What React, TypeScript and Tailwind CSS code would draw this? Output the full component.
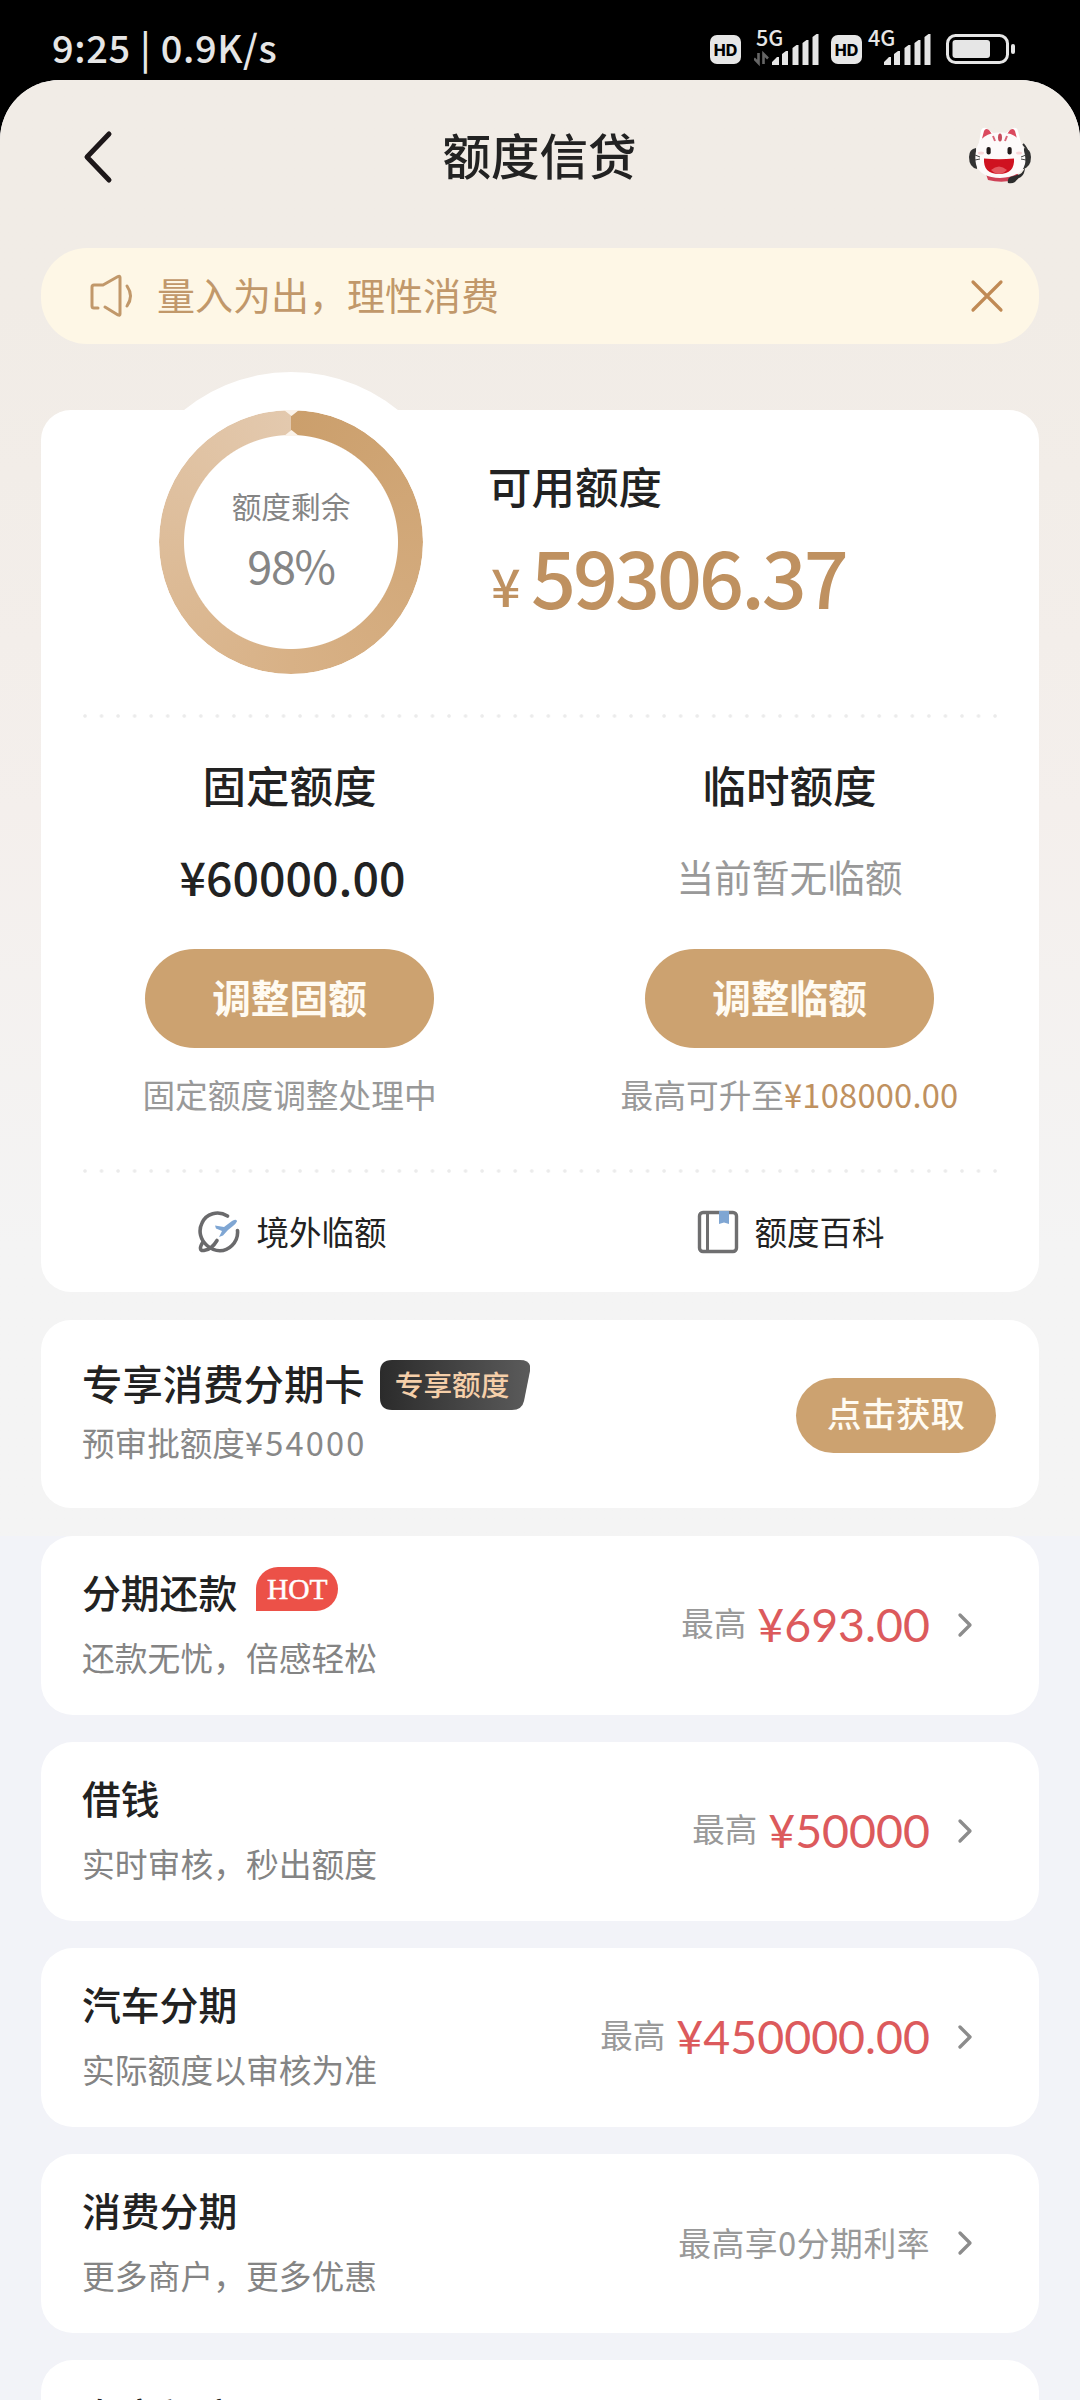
import { FiChevronRight } from "react-icons/fi";

const products = [
  { title: "分期还款", desc: "还款无忧，倍感轻松", amount: "¥693.00", hot: true },
  { title: "借钱", desc: "实时审核，秒出额度", amount: "¥50000" },
  { title: "汽车分期", desc: "实际额度以审核为准", amount: "¥450000.00" },
  { title: "消费分期", desc: "更多商户，更多优惠", note: "最高享0分期利率" },
];

function HdBadge() {
  return (
    <div className="mt-[35px] flex h-[29px] w-[31px] items-center justify-center rounded-[7px] bg-[#e6e6e6] font-['Inter'] text-[16px] font-extrabold leading-none text-black">
      HD
    </div>
  );
}

function Signal({ label, arrows }: { label: string; arrows?: boolean }) {
  return (
    <svg className="block h-20 w-[66px]" viewBox="0 0 66 80" fill="#e6e6e6">
      <text x="2" y="45.5" fontSize="21.5" fontWeight="500" fontFamily="Noto Sans CJK SC, sans-serif">
        {label}
      </text>
      {arrows && (
        <path d="M4.5 53v10L0 58.500M9.500 64V54l4.500 4.500" stroke="#666" strokeWidth="2.600" fill="none" />
      )}
      <path d="M18 65v-3l5-5h2v8zM28 65V54l4-3h2v14zM38.500 65V48l4-3h2v20zM48.500 65V43l4-3h2v25zM58.500 65V37l4-3h2v31z" />
    </svg>
  );
}

function StatusBar() {
  return (
    <div className="flex h-20 justify-between bg-black pl-[52px] pr-[64px]">
      <span className="pt-[11px] text-[38px] font-medium leading-[72px] tracking-[0.65px] text-[#e6e6e6]">
        9:25 | 0.9K/s
      </span>
      <div className="flex">
        <HdBadge />
        <div className="ml-[13px]">
          <Signal label="5G" arrows />
        </div>
        <div className="ml-[11px]">
          <HdBadge />
        </div>
        <div className="ml-[4px]">
          <Signal label="4G" />
        </div>
        <svg className="ml-[14px] block h-20 w-[70px]" viewBox="0 0 70 80" fill="#e6e6e6">
          <rect x="1.500" y="35.500" width="60" height="27" rx="8" fill="none" stroke="#e6e6e6" strokeWidth="3" />
          <rect x="6.500" y="40" width="37.500" height="18" rx="3" />
          <rect x="65" y="44" width="4" height="10" rx="2" />
        </svg>
      </div>
    </div>
  );
}

function CatAvatar() {
  return (
    <svg className="block h-[62px] w-[66px]" viewBox="0 0 66 62">
      <path d="M56 19q4 4 5 10" fill="none" stroke="#333" strokeWidth="2" />
      <path d="M12 18L14 6q1-4 5-3l10 7zM54 18L51 6q-1-4-5-3l-10 7z" fill="#fff" />
      <path d="M14.500 15.500L17 6q1.500-3.500 5-1l4 5.500zM50.500 15.500L48 6q-1.500-3.500-5-1l-4 5.500z" fill="#db4a5f" />
      <path d="M9 23q-7 1-7 9 0 10 8 12zM57 23q7 1 7 9 0 10-8 12z" fill="#333" />
      <path d="M19 49h32v5q-15 5-30 1z" fill="#cf4257" />
      <path d="M33 7.500C46 7.500 53 13 56 22c2 7 3 12 2 17-2 9-13 14-25 14S11 48 9 39c-1-5-1-10 1-17C13 13 20 7.500 33 7.500z" fill="#fdfafa" />
      <path d="M58 42q-2 7-8 8l-7 2q-3 2-2 6 4 1 7-1 3-4 6-5 4-3 4-10z" fill="#2d2d2d" />
      <path d="M26 11l2 5M40 11l-2 5" stroke="#d9687a" strokeWidth="2" />
      <ellipse cx="33" cy="12.500" rx="2" ry="4" fill="#c64b5b" />
      <rect x="19.500" y="22" width="4.200" height="7.500" rx="2" fill="#211a1a" />
      <rect x="40.500" y="22" width="4.200" height="7.500" rx="2" fill="#211a1a" />
      <path d="M17 33.500q15 1.500 30 0 1 15.500-15 15.500T17 33.500z" fill="#cf1220" />
      <path d="M24 45q8-7 16 0-4 4-8 4t-8-4z" fill="#e4575f" />
      <path d="M8 30l5 2M8 35l5-1M59 30l-5 2M59 35l-5-1" stroke="#444" strokeWidth="1" />
      <ellipse cx="14" cy="28" rx="3" ry="1.500" fill="#f9d5d8" />
      <ellipse cx="52" cy="28" rx="3" ry="1.500" fill="#f9d5d8" />
    </svg>
  );
}

function Header() {
  return (
    <div className="flex h-[168px] items-start justify-between pl-[82px] pr-[47px] pt-[45px]">
      <div className="flex h-[64px] w-[68px] items-center">
        <svg className="h-[54px] w-[32px]" viewBox="0 0 32 54" fill="none">
          <path d="M27 4L5 27l22 23" stroke="#1d1719" strokeWidth="5" strokeLinecap="round" strokeLinejoin="round" />
        </svg>
      </div>
      <h1 className="pr-[38px] text-[48.5px] font-medium leading-[58px] text-[#222]">额度信贷</h1>
      <CatAvatar />
    </div>
  );
}

function Notice() {
  return (
    <div className="mx-[41px] flex h-[96px] items-center rounded-[46px] bg-[#fef7e6] pl-[49px] pr-[35px] text-[#c1986a]">
      <svg className="h-[44px] w-[46px]" viewBox="0 0 46 44" fill="none" stroke="currentColor" strokeWidth="3" strokeLinejoin="round" strokeLinecap="round">
        <path d="M8 34H4q-2 0-2-2V13q0-2 2-2h9L28 2.500q2-1 2 1V40q0 2-2 1l-13-8" />
        <path d="M37 12q7 10 0 20" />
      </svg>
      <span className="relative -top-[2px] ml-[21px] grow text-[38px] leading-[60px]">量入为出，理性消费</span>
      <svg className="h-[34px] w-[34px]" viewBox="0 0 34 34" fill="none" stroke="#c08a55" strokeWidth="3.200" strokeLinecap="round">
        <path d="M3 3l28 28M31 3L3 31" />
      </svg>
    </div>
  );
}

function LimitRing() {
  return (
    <div className="relative ml-[118px] h-[264px] w-[264px]">
      <div className="absolute -inset-[38px] rounded-full bg-white" />
      <div className="absolute inset-0 rounded-full bg-[conic-gradient(#cb9f6c,#d8b186_50%,#e3c9ae)] [mask:radial-gradient(closest-side,transparent_106.5px,#000_107.5px)]" />
      <svg className="absolute inset-0 h-full w-full" viewBox="0 0 264 264" fill="#fbf3ea">
        <path d="M125 0h15l-7.500 6zM125 26h15l-7.500-6z" />
      </svg>
      <div className="relative flex flex-col items-center pt-[73px] text-[#858585]">
        <span className="text-[29.700px] leading-[46px]">额度剩余</span>
        <span className="mt-[8px] text-[45px] leading-[56px] tracking-[-1.3px]">98%</span>
      </div>
    </div>
  );
}

function DottedLine() {
  return (
    <div className="mx-[42px] h-[4px] bg-[radial-gradient(circle_at_2px_2px,#ebebeb_1.3px,transparent_2.2px)] bg-[length:16.55px_4px]" />
  );
}

function GlobeIcon() {
  return (
    <svg className="h-[44px] w-[44px]" viewBox="0 0 44 44" fill="none" stroke="#6a6a6c" strokeWidth="3.600" strokeLinecap="round">
      <path d="M30.500 6C21 0 9 3.500 5 13c-4 8-1.500 17 5 22.500 8 7 18 7 25 0 4.500-4.500 6-10 5.500-15" />
      <path d="M6 32c-4 6-3 9 1 8.500 5-.5 10-5 13-10" />
      <path d="M18 15.500l9 1.500 8-6q5-2.500 5 .5-1 2-4 4.500l-5 4-5 5.500-4 1.500 3-6-6-2.500z" fill="#7fa6d3" stroke="none" />
    </svg>
  );
}

function BookIcon() {
  return (
    <svg className="h-[44px] w-[42px]" viewBox="0 0 42 44" fill="none">
      <rect x="2.500" y="2.500" width="37" height="39" rx="3.500" stroke="#6f6f70" strokeWidth="3.400" />
      <path d="M10.500 3v38" stroke="#6f6f70" strokeWidth="3" />
      <path d="M22 1h10v13l-5-1.500-5 1.500z" fill="#7fa6d3" />
    </svg>
  );
}

function LimitCard() {
  return (
    <section className="mx-[41px] mt-[66px] h-[882px] rounded-[30px] bg-white">
      <div className="flex h-[304px]">
        <LimitRing />
        <div className="ml-[65px] pt-[46px]">
          <div className="text-[43.500px] font-medium leading-[60px] text-[#222]">可用额度</div>
          <div className="mt-[4px] flex items-baseline leading-[110px] text-[#bf9160]">
            <span className="relative -top-[2px] w-[43px] pl-[3px] text-[52px] font-medium">¥</span>
            <span className="text-[79px] font-medium tracking-[-3px]">59306.37</span>
          </div>
        </div>
      </div>
      <DottedLine />
      <div className="grid h-[451px] grid-cols-2 text-center">
        <div className="flex flex-col items-center pr-[2px] pt-[37px]">
          <div className="text-[43.500px] font-medium leading-[60px] text-[#222]">固定额度</div>
          <div className="mt-[31px] pl-[6px] text-[46.5px] font-medium leading-[60px] text-[#222]">¥60000.00</div>
          <button className="mt-[43px] h-[99px] w-[289px] rounded-full bg-[#cca270] pb-[4px] text-[38.7px] font-bold text-[#fffbf2]">
            调整固额
          </button>
          <div className="mt-[21px] text-[32.7px] leading-[50px] text-[#999]">固定额度调整处理中</div>
        </div>
        <div className="flex flex-col items-center pt-[37px]">
          <div className="text-[43.500px] font-medium leading-[60px] text-[#222]">临时额度</div>
          <div className="mt-[31px] text-[37.700px] leading-[60px] text-[#999]">当前暂无临额</div>
          <button className="mt-[43px] h-[99px] w-[289px] rounded-full bg-[#cca270] pb-[4px] text-[38.7px] font-bold text-[#fffbf2]">
            调整临额
          </button>
          <div className="mt-[21px] text-[32.7px] leading-[50px] text-[#999]">
            最高可升至<span className="tracking-[0.2px] text-[#bf9160]">¥108000.00</span>
          </div>
        </div>
      </div>
      <DottedLine />
      <div className="grid h-[118px] grid-cols-2 text-[32.500px] text-[#222]">
        <div className="flex items-center justify-center gap-[15px] pl-[3px]">
          <GlobeIcon />
          <span className="relative -top-[1px]">境外临额</span>
        </div>
        <div className="flex items-center justify-center gap-[15px] pl-[3px]">
          <BookIcon />
          <span className="relative -top-[1px]">额度百科</span>
        </div>
      </div>
    </section>
  );
}

function InstallmentCard() {
  return (
    <section className="mx-[41px] mt-[28px] flex h-[188px] items-center justify-between rounded-[30px] bg-white pl-[41px] pr-[43px]">
      <div className="pb-[7px]">
        <div className="flex items-center">
          <span className="relative -top-[2px] text-[40.400px] font-medium leading-[60px] text-[#222]">专享消费分期卡</span>
          <div className="relative ml-[15px] h-[50px] w-[150px]">
            <svg className="absolute inset-0" width="150" height="50" viewBox="0 0 150 50">
              <defs>
                <linearGradient id="badge">
                  <stop offset="0" stopColor="#2b2b2b" />
                  <stop offset="1" stopColor="#5b5b5b" />
                </linearGradient>
              </defs>
              <path d="M12 0h128q12 0 10 11l-6 30q-2 9-12 9H12Q0 50 0 38V12Q0 0 12 0z" fill="url(#badge)" />
            </svg>
            <span className="relative block pl-[15px] text-[28.700px] font-medium leading-[47px] text-[#f5cfa9]">专享额度</span>
          </div>
        </div>
        <div className="mt-[2px] text-[32.600px] leading-[50px] text-[#888]">
          预审批额度<span className="tracking-[2.2px]">¥54000</span>
        </div>
      </div>
      <button className="relative top-[1px] h-[75px] w-[200px] rounded-full bg-[#cca270] pb-[4px] text-[34.500px] font-medium text-[#fffbf2]">
        点击获取
      </button>
    </section>
  );
}

function ProductRow({ item }: { item: (typeof products)[number] }) {
  return (
    <div className="flex h-[179px] shrink-0 items-center rounded-[32px] bg-white pl-[41px] pr-[54px]">
      <div className="grow pb-[5px]">
        <div className="flex h-[60px] items-center">
          <span className="relative -top-[3px] text-[38.800px] font-medium text-[#222]">{item.title}</span>
          {item.hot && (
            <span className="relative -top-[5px] ml-[19px] h-[44px] w-[82px] rounded-[22px] rounded-bl-none bg-[#ec5148] text-center font-['Liberation_Serif'] text-[29.500px] leading-[44px] text-white [-webkit-text-stroke:0.5px_white]">
              HOT
            </span>
          )}
        </div>
        <div className="mt-[8px] text-[32.800px] leading-[50px] text-[#848484]">{item.desc}</div>
      </div>
      {item.note ? (
        <span className="relative -top-[2px] text-[32.800px] tracking-[0.5px] text-[#999]">{item.note}</span>
      ) : (
        <div className="flex items-center text-[#999]">
          <span className="relative -top-[3px] text-[32.500px]">最高</span>
          <span className="relative -top-[2px] ml-[11px] font-['Lato'] text-[46.500px] leading-[60px] text-[#dc5a5c]">{item.amount}</span>
        </div>
      )}
      <FiChevronRight className="relative -top-[1px] ml-[15px] h-[40px] w-[40px] text-[#8c8c8c]" />
    </div>
  );
}

export default function App() {
  return (
    <div className="h-[2400px] w-[1080px] overflow-hidden bg-black font-['Noto_Sans_CJK_SC',sans-serif]">
      <StatusBar />
      <main className="h-[2320px] overflow-hidden rounded-t-[60px] bg-[#f2f3f8]">
        <div className="h-[1456px] bg-linear-to-b from-[#f1ece6] from-15% via-[#f4efec] via-50% to-[#f4f4f4] to-80%">
          <Header />
          <Notice />
          <LimitCard />
          <InstallmentCard />
        </div>
        <div className="mx-[41px] flex flex-col gap-[27px]">
          {products.map((item) => (
            <ProductRow key={item.title} item={item} />
          ))}
          <div className="h-[179px] shrink-0 rounded-[32px] bg-white pl-[41px] pt-[26px] text-[38.800px] font-medium text-[#222]">
            专享额度
          </div>
        </div>
      </main>
    </div>
  );
}
